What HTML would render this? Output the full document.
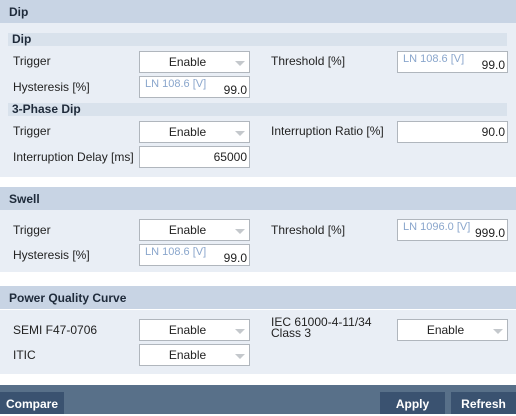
<!DOCTYPE html>
<html><head><style>
*{margin:0;padding:0;box-sizing:border-box}
body{width:516px;height:414px;background:#fff;font-family:"Liberation Sans",sans-serif;font-size:12px;color:#222;position:relative;overflow:hidden}
.a{position:absolute}
.hd{left:0;width:516px;height:23px;background:#c8d4e4;font-weight:bold;color:#1e2a3a;padding:5px 0 0 9px}
.bd{left:0;width:516px;background:#e9eef5}
.sh{left:8px;width:499px;height:13px;background:#d9e2ec;font-weight:bold;font-size:12px;line-height:13px;padding-left:4px;color:#1e2a3a}
.lb{line-height:14px}
.bx{width:111px;height:22px;background:#fff;border:1px solid #b0b6bd}
.sel{text-align:center;line-height:20px;padding-right:14px}
.sel:after{content:"";position:absolute;right:4px;top:9px;border-left:5px solid transparent;border-right:5px solid transparent;border-top:5px solid #c4c8cc}
.in{text-align:right;padding-right:2px;line-height:26px}
.ph{position:absolute;left:5px;top:1px;line-height:13px;color:#8aa6cc;font-size:11px}
.ft{left:0;top:385px;width:516px;height:29px;background:#587089}
.bt{top:392px;height:22px;background:#3a5270;color:#fff;font-weight:bold;text-align:center;line-height:24px}
</style></head><body>
<div class="a hd" style="top:0">Dip</div>
<div class="a bd" style="top:23px;height:154px"></div>
<div class="a sh" style="top:33px">Dip</div>
<div class="a lb" style="left:13px;top:54px">Trigger</div>
<div class="a bx sel" style="left:139px;top:51px">Enable</div>
<div class="a lb" style="left:271px;top:54px">Threshold [%]</div>
<div class="a bx in" style="left:397px;top:51px"><span class="ph">LN 108.6 [V]</span>99.0</div>
<div class="a lb" style="left:13px;top:80px">Hysteresis [%]</div>
<div class="a bx in" style="left:139px;top:76px"><span class="ph">LN 108.6 [V]</span>99.0</div>
<div class="a sh" style="top:103px">3-Phase Dip</div>
<div class="a lb" style="left:13px;top:124px">Trigger</div>
<div class="a bx sel" style="left:139px;top:121px">Enable</div>
<div class="a lb" style="left:271px;top:124px">Interruption Ratio [%]</div>
<div class="a bx in" style="left:397px;top:121px;line-height:20px">90.0</div>
<div class="a lb" style="left:13px;top:150px">Interruption Delay [ms]</div>
<div class="a bx in" style="left:139px;top:146px;line-height:20px">65000</div>

<div class="a hd" style="top:187px">Swell</div>
<div class="a bd" style="top:210px;height:62px"></div>
<div class="a lb" style="left:13px;top:223px">Trigger</div>
<div class="a bx sel" style="left:139px;top:219px">Enable</div>
<div class="a lb" style="left:271px;top:223px">Threshold [%]</div>
<div class="a bx in" style="left:397px;top:219px"><span class="ph">LN 1096.0 [V]</span>999.0</div>
<div class="a lb" style="left:13px;top:248px">Hysteresis [%]</div>
<div class="a bx in" style="left:139px;top:244px"><span class="ph">LN 108.6 [V]</span>99.0</div>

<div class="a hd" style="top:286px">Power Quality Curve</div>
<div class="a bd" style="top:310px;height:64px"></div>
<div class="a lb" style="left:13px;top:323px">SEMI F47-0706</div>
<div class="a bx sel" style="left:139px;top:319px">Enable</div>
<div class="a lb" style="left:271px;top:317px;line-height:11px">IEC 61000-4-11/34<br>Class 3</div>
<div class="a bx sel" style="left:397px;top:319px">Enable</div>
<div class="a lb" style="left:13px;top:348px">ITIC</div>
<div class="a bx sel" style="left:139px;top:344px">Enable</div>

<div class="a ft"></div>
<div class="a bt" style="left:0;width:64px">Compare</div>
<div class="a bt" style="left:380px;width:65px">Apply</div>
<div class="a bt" style="left:451px;width:65px">Refresh</div>
</body></html>
